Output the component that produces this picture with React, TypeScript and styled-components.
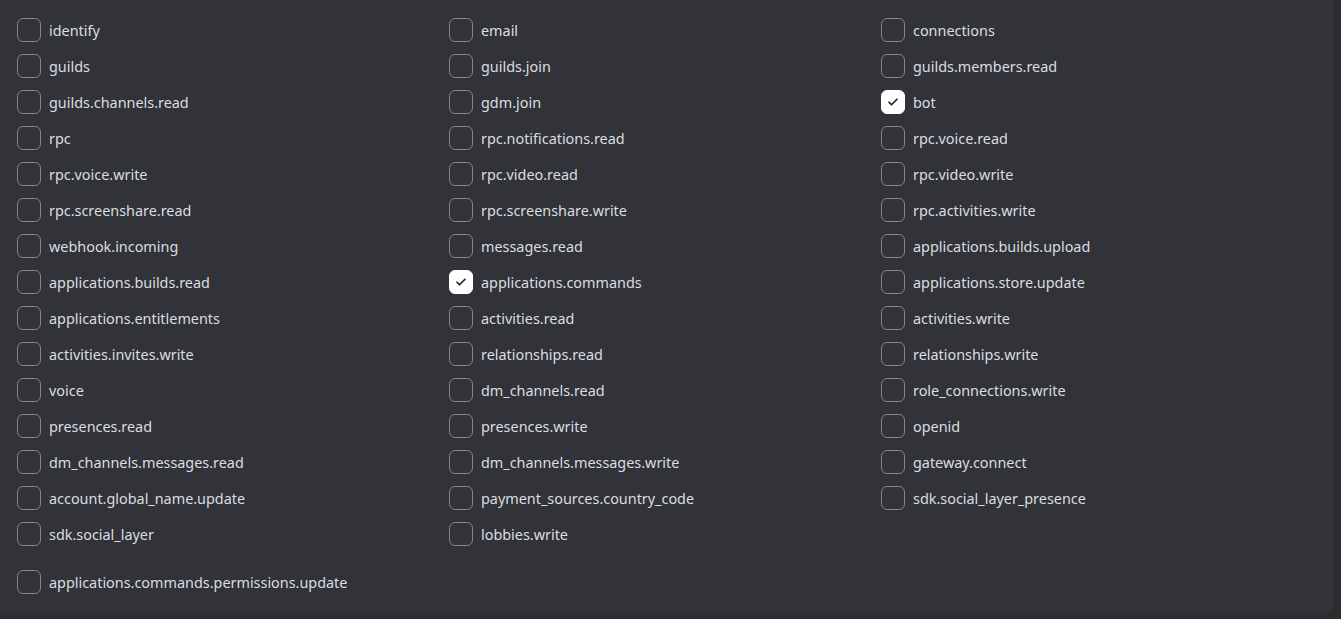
import React from 'react';
import styled, { createGlobalStyle } from 'styled-components';

const scopes: { name: string; checked?: boolean }[] = [
  { name: 'identify' },
  { name: 'email' },
  { name: 'connections' },
  { name: 'guilds' },
  { name: 'guilds.join' },
  { name: 'guilds.members.read' },
  { name: 'guilds.channels.read' },
  { name: 'gdm.join' },
  { name: 'bot', checked: true },
  { name: 'rpc' },
  { name: 'rpc.notifications.read' },
  { name: 'rpc.voice.read' },
  { name: 'rpc.voice.write' },
  { name: 'rpc.video.read' },
  { name: 'rpc.video.write' },
  { name: 'rpc.screenshare.read' },
  { name: 'rpc.screenshare.write' },
  { name: 'rpc.activities.write' },
  { name: 'webhook.incoming' },
  { name: 'messages.read' },
  { name: 'applications.builds.upload' },
  { name: 'applications.builds.read' },
  { name: 'applications.commands', checked: true },
  { name: 'applications.store.update' },
  { name: 'applications.entitlements' },
  { name: 'activities.read' },
  { name: 'activities.write' },
  { name: 'activities.invites.write' },
  { name: 'relationships.read' },
  { name: 'relationships.write' },
  { name: 'voice' },
  { name: 'dm_channels.read' },
  { name: 'role_connections.write' },
  { name: 'presences.read' },
  { name: 'presences.write' },
  { name: 'openid' },
  { name: 'dm_channels.messages.read' },
  { name: 'dm_channels.messages.write' },
  { name: 'gateway.connect' },
  { name: 'account.global_name.update' },
  { name: 'payment_sources.country_code' },
  { name: 'sdk.social_layer_presence' },
  { name: 'sdk.social_layer' },
  { name: 'lobbies.write' },
];

const extra = 'applications.commands.permissions.update';

const CheckIcon = () => (
  <svg width="12" height="12" viewBox="0 0 24 24" fill="none">
    <path
      d="M4 12.5l5 5L20 6.5"
      stroke="#1e1f22"
      strokeWidth="3.4"
      strokeLinecap="round"
      strokeLinejoin="round"
    />
  </svg>
);

const ScopeItem: React.FC<{ name: string; checked?: boolean }> = ({ name, checked }) => (
  <Item>
    <Box checked={!!checked}>{checked && <CheckIcon />}</Box>
    <Label>{name}</Label>
  </Item>
);

export default function App() {
  return (
    <>
      <GlobalStyle />
      <Page>
        <Panel>
          <ScopeGrid>
            {scopes.map((s) => (
              <ScopeItem key={s.name} name={s.name} checked={s.checked} />
            ))}
          </ScopeGrid>
          <ExtraRow>
            <ScopeItem name={extra} />
          </ExtraRow>
        </Panel>
      </Page>
    </>
  );
}

const GlobalStyle = createGlobalStyle`
  html, body {
    margin: 0;
    padding: 0;
    background: #2b2d31;
  }
  body {
    font-family: "Noto Sans", "Open Sans", sans-serif;
  }
`;

const Page = styled.div`
  width: 1341px;
  height: 619px;
  overflow: hidden;
  padding-right: 8px;
  padding-bottom: 6px;
  box-sizing: border-box;
`;

const Panel = styled.div`
  height: 100%;
  background: #313338;
  border-radius: 0 0 8px 0;
  padding: 18px 0 0 17px;
  box-sizing: border-box;
`;

const ScopeGrid = styled.div`
  display: grid;
  grid-template-columns: repeat(3, 432px);
  row-gap: 12px;
`;

const ExtraRow = styled.div`
  margin-top: 24px;
`;

const Item = styled.div`
  display: flex;
  align-items: center;
  gap: 8px;
  height: 24px;
`;

const Box = styled.div<{ checked: boolean }>`
  width: 24px;
  height: 24px;
  box-sizing: border-box;
  border-radius: 6px;
  border: 1px solid ${({ checked }) => (checked ? '#ffffff' : '#80848e')};
  background: ${({ checked }) => (checked ? '#ffffff' : 'transparent')};
  display: flex;
  align-items: center;
  justify-content: center;
  flex-shrink: 0;
`;

const Label = styled.span`
  font-size: 14.4px;
  line-height: 20px;
  padding-top: 2px;
  color: #dbdee1;
  white-space: nowrap;
`;
